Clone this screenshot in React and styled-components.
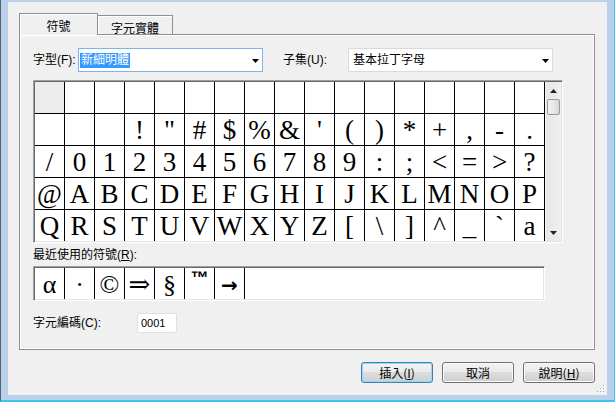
import React from 'react'
import styled, { createGlobalStyle } from 'styled-components'

const GlobalStyle = createGlobalStyle`
  html, body { margin: 0; padding: 0; background: #b9d1ea; }
  body {
    font-family: "Liberation Sans", "Noto Sans CJK TC", sans-serif;
    font-size: 12px;
    color: #000;
  }
  * { box-sizing: border-box; }
`

const rows = [
  Array(17).fill(''),
  ['', '', '', '!', '"', '#', '$', '%', '&', "'", '(', ')', '*', '+', ',', '-', '.'],
  '/0123456789:;<=>?'.split(''),
  '@ABCDEFGHIJKLMNOP'.split(''),
  'QRSTUVWXYZ[\\]^_`a'.split(''),
]

const recent = [
  { ch: 'α' },
  { ch: '·' },
  { ch: '©' },
  { ch: '⇒' },
  { ch: '§' },
  { ch: '™', kind: 'tm' },
  { ch: '→', kind: 'arrow' },
]

function App() {
  return (
    <Window>
      <GlobalStyle />
      <Client>
        <TabStrip>
          <Tab $active>符號</Tab>
          <Tab>字元實體</Tab>
        </TabStrip>
        <Panel>
          <FieldRow>
            <Label $w={45}>字型(F):</Label>
            <Combo $w={185} $focus>
              <Selected>新細明體</Selected>
              <Arrow />
            </Combo>
            <Label $w={65} $gap={20}>子集(U):</Label>
            <Combo $w={205}>
              <ComboText>基本拉丁字母</ComboText>
              <Arrow />
            </Combo>
          </FieldRow>

          <Sunken $top={8}>
            <GridFrame>
              <CharGrid>
                {rows.map((r, i) =>
                  r.map((c, j) => (
                    <Cell key={i + '-' + j} $gray={i === 0 && j === 0}>{c}</Cell>
                  ))
                )}
              </CharGrid>
              <ScrollBar>
                <ScrollBtn>
                  <svg width="7" height="4" viewBox="0 0 7 4"><polygon points="3.5,0 7,4 0,4" fill="#222" /></svg>
                </ScrollBtn>
                <Thumb />
                <Track />
                <ScrollBtn>
                  <svg width="7" height="4" viewBox="0 0 7 4"><polygon points="0,0 7,0 3.5,4" fill="#222" /></svg>
                </ScrollBtn>
              </ScrollBar>
            </GridFrame>
          </Sunken>

          <SectionLabel>最近使用的符號(<U>R</U>):</SectionLabel>
          <Sunken $top={4} $w={512}>
            <RecentRow>
              {recent.map((s, i) => (
                <RecentCell key={i} $kind={s.kind}>{s.ch}</RecentCell>
              ))}
            </RecentRow>
          </Sunken>

          <CodeRow>
            <Label $w={104}>字元編碼(C):</Label>
            <CodeInput>0001</CodeInput>
          </CodeRow>
        </Panel>

        <Buttons>
          <Button $default>插入(<U>I</U>)</Button>
          <Button>取消</Button>
          <Button>說明(<U>H</U>)</Button>
        </Buttons>

        <Grip>
          <svg width="9" height="9" viewBox="0 0 9 9">
            {[[7, 1], [7, 4], [4, 4], [7, 7], [4, 7], [1, 7]].map(([x, y]) => (
              <g key={x + '' + y}>
                <rect x={x + 1} y={y + 1} width="1" height="1" fill="#fff" />
                <rect x={x} y={y} width="1" height="1" fill="#a8acb2" />
              </g>
            ))}
          </svg>
        </Grip>
      </Client>
    </Window>
  )
}

export default App

function Arrow() {
  return (
    <ArrowBox>
      <svg width="7" height="4" viewBox="0 0 7 4"><polygon points="0,0 7,0 3.5,4" fill="#000" /></svg>
    </ArrowBox>
  )
}

const Window = styled.div`
  width: 615px;
  height: 402px;
  background: #b9d1ea;
  border-left: 1px solid #55606c;
  border-right: 1px solid #41c3ee;
  border-bottom: 2px solid #41c3ee;
  padding: 2px 7px 5px 7px;
`

const Client = styled.div`
  position: relative;
  height: 100%;
  background: #f0f0f0;
  padding: 11px 12px 0 11px;
  display: flex;
  flex-direction: column;
`

const TabStrip = styled.div`
  display: flex;
  align-items: flex-end;
  height: 22px;
  margin-bottom: -1px;
`

const Tab = styled.div`
  position: ${p => (p.$active ? 'relative' : 'static')};
  z-index: ${p => (p.$active ? 1 : 'auto')};
  width: ${p => (p.$active ? 79 : 76)}px;
  height: ${p => (p.$active ? 22 : 20)}px;
  margin-left: ${p => (p.$active ? 0 : -1)}px;
  border: 1px solid #8e8f8f;
  border-bottom: none;
  background: #f0f0f0;
  box-shadow: inset 1px 1px 0 #fff;
  padding-top: 5px;
  text-align: center;
  line-height: 13px;
  font-family: "Noto Sans CJK TC", sans-serif;
`

const Panel = styled.div`
  width: 576px;
  height: 316px;
  border: 1px solid #8e8f8f;
  box-shadow: inset 0 0 0 1px #fff;
  background: #f0f0f0;
  padding: 13px 0 0 13px;
`

const FieldRow = styled.div`
  display: flex;
  align-items: center;
  height: 24px;
`

const Label = styled.div`
  width: ${p => p.$w}px;
  margin-left: ${p => p.$gap || 0}px;
  line-height: 14px;
  white-space: nowrap;
`

const Combo = styled.div`
  width: ${p => p.$w}px;
  height: 24px;
  display: flex;
  align-items: center;
  background: #fff;
  border: 1px solid ${p => (p.$focus ? '#7eb4ea' : '#dadada')};
  padding-left: 1px;
`

const Selected = styled.span`
  background: #3399ff;
  color: #fff;
  line-height: 15px;
  padding: 0 1px;
`

const ComboText = styled.span`
  padding-left: 3px;
  line-height: 15px;
`

const ArrowBox = styled.div`
  margin-left: auto;
  width: 14px;
  display: flex;
  align-items: center;
  justify-content: center;
  padding-top: 2px;
`

const Sunken = styled.div`
  margin-top: ${p => p.$top}px;
  width: ${p => (p.$w ? p.$w + 'px' : 'fit-content')};
  border-style: solid;
  border-width: 1px;
  border-color: #a0a0a0 #fff #fff #a0a0a0;
  padding: 1px;
  background: #fff;
  box-shadow: inset 1px 1px 0 #696969, inset -1px -1px 0 #e3e3e3;
`

const GridFrame = styled.div`
  display: flex;
`

const CharGrid = styled.div`
  display: grid;
  grid-template-columns: repeat(17, 30px);
  grid-auto-rows: 32px;
  height: 159px;
  overflow: hidden;
`

const Cell = styled.div`
  border-right: 1px solid #000;
  border-bottom: 1px solid #000;
  background: ${p => (p.$gray ? '#ececec' : '#fff')};
  display: flex;
  align-items: center;
  justify-content: center;
  padding-top: 1px;
  font-family: "Liberation Serif", "DejaVu Serif", serif;
  font-size: 27px;
  line-height: 1;
  overflow: hidden;
`

const ScrollBar = styled.div`
  width: 16px;
  height: 159px;
  display: flex;
  flex-direction: column;
  background: linear-gradient(90deg, #e6e6e6, #f0f0f0);
  border-left: 1px solid #f6f6f6;
`

const ScrollBtn = styled.div`
  height: 17px;
  display: flex;
  align-items: center;
  justify-content: center;
`

const Thumb = styled.div`
  height: 16px;
  margin: 0 1px;
  border: 1px solid #9a9a9a;
  border-radius: 2px;
  background: linear-gradient(90deg, #f3f3f3, #e8e8e8 50%, #d6d6d6);
`

const Track = styled.div`
  flex: 1;
`

const SectionLabel = styled.div`
  margin-top: 5px;
  line-height: 14px;
`

const U = styled.span`
  text-decoration: underline;
`

const RecentRow = styled.div`
  display: flex;
  height: 31px;
`

const recentFont = {
  tm: '700 18px/1 "Liberation Sans", sans-serif',
  arrow: '700 20px/1 "DejaVu Sans", sans-serif',
}

const RecentCell = styled.div`
  width: 30px;
  border-right: 1px solid #000;
  display: flex;
  align-items: ${p => (p.$kind === 'tm' ? 'flex-start' : 'center')};
  justify-content: center;
  padding-top: ${p => (p.$kind === 'tm' ? 1 : 2)}px;
  font: ${p => recentFont[p.$kind] || '400 26px/1 "Liberation Serif", "DejaVu Serif", serif'};
  overflow: hidden;
`

const CodeRow = styled.div`
  margin-top: 12px;
  display: flex;
  align-items: center;
  height: 20px;
`

const CodeInput = styled.div`
  width: 40px;
  height: 20px;
  background: #fff;
  border: 1px solid #e0e0e0;
  border-radius: 2px;
  padding-left: 3px;
  font-size: 11px;
  line-height: 18px;
`

const Buttons = styled.div`
  margin-top: 12px;
  display: flex;
  justify-content: flex-end;
  gap: 9px;
`

const Button = styled.button`
  width: 72px;
  height: 21px;
  padding: 0;
  font-family: "Noto Sans CJK TC", sans-serif;
  font-size: 12px;
  line-height: 1;
  color: #000;
  border: 1px solid ${p => (p.$default ? '#3c7fb1' : '#707070')};
  border-radius: 3px;
  background: linear-gradient(#f2f2f2 0%, #ebebeb 50%, #dddddd 50%, #cfcfcf 100%);
  box-shadow: inset 0 0 0 1px ${p => (p.$default ? '#8fdcfa' : '#fbfbfb')};
`

const Grip = styled.div`
  position: absolute;
  right: 2px;
  bottom: 2px;
  line-height: 0;
`
